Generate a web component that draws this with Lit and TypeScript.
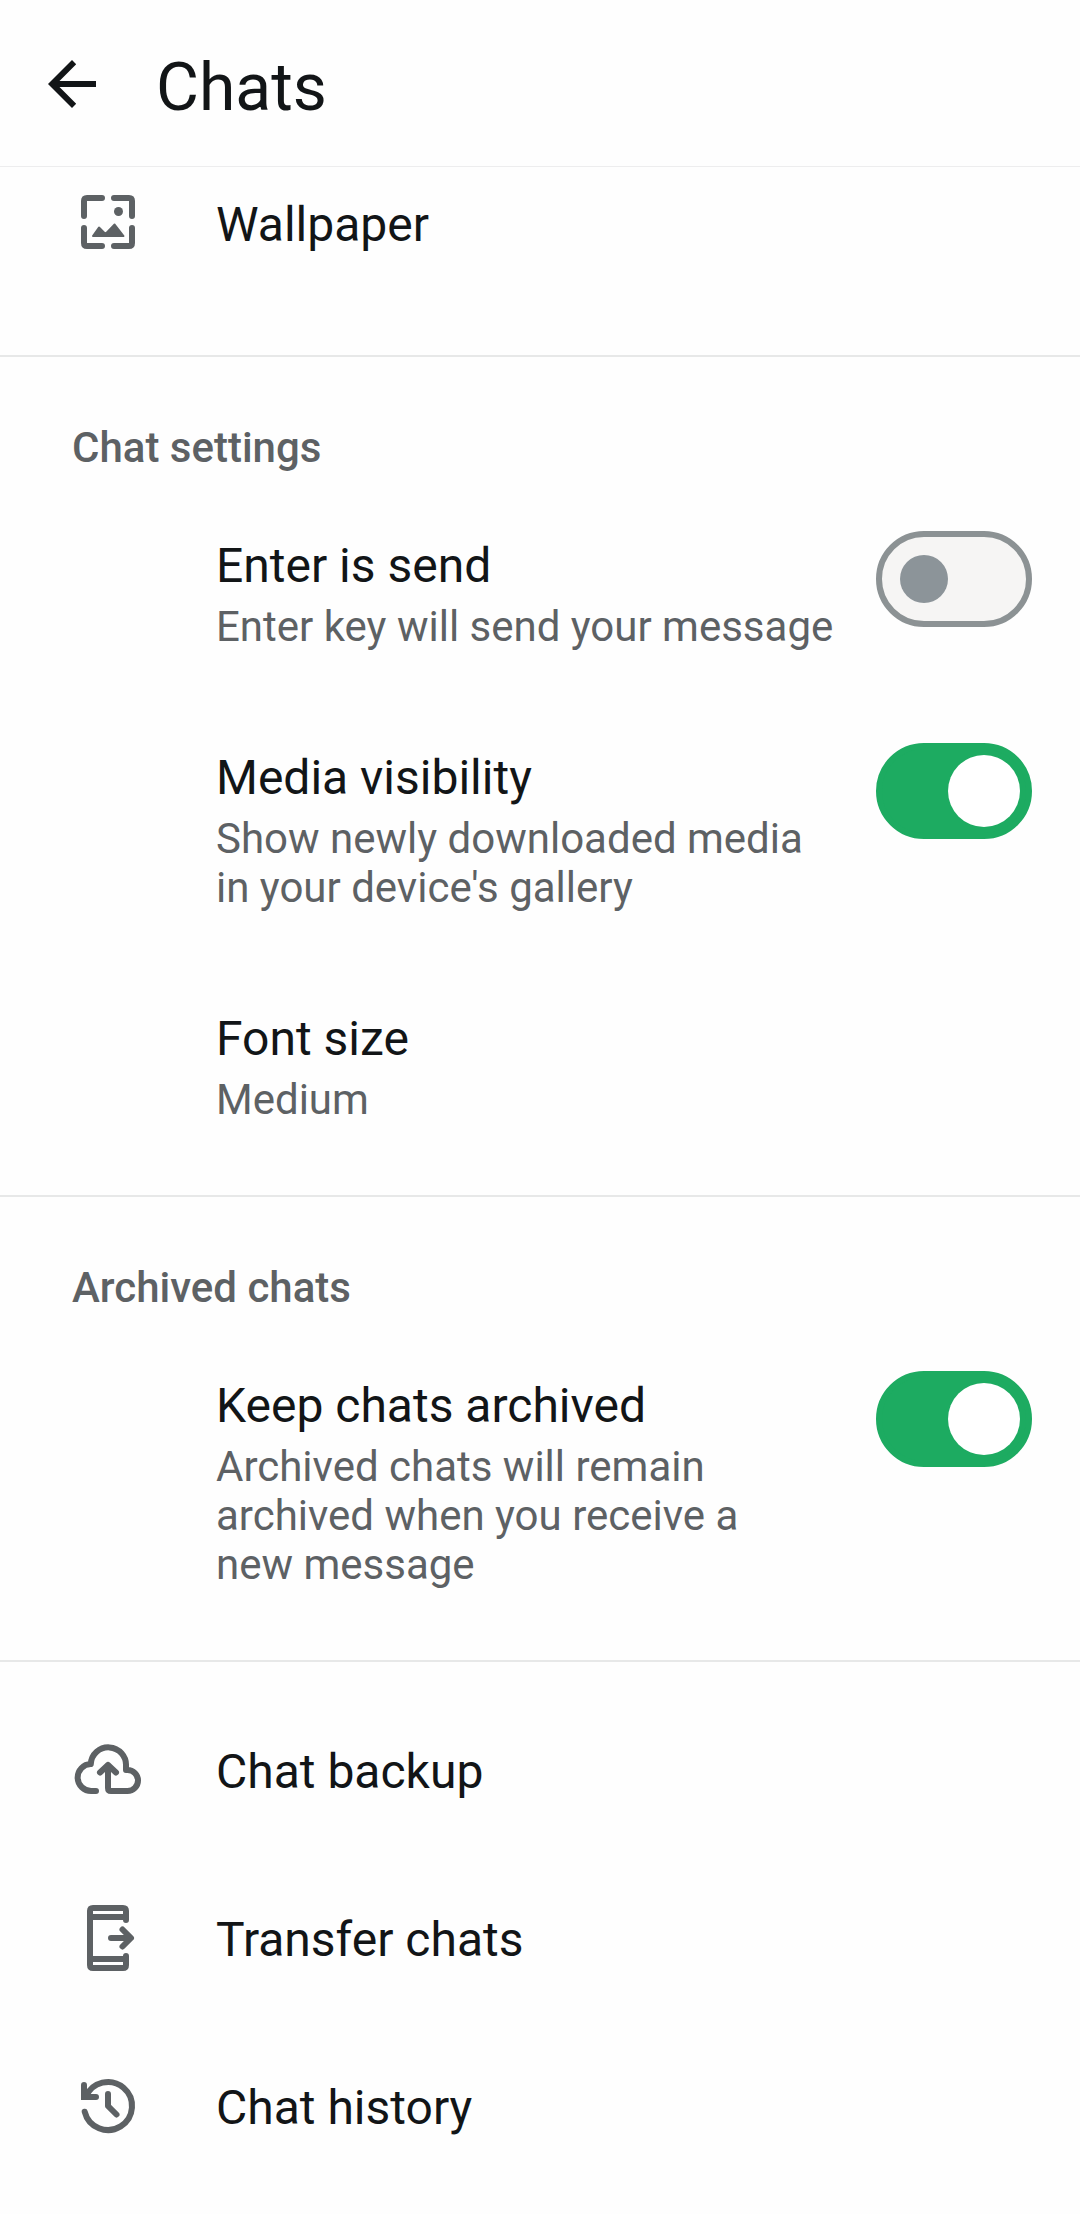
import { LitElement, html, css, svg, nothing } from "lit";
import { customElement, property, state } from "lit/decorators.js";

const icons = {
  back: svg`<path fill="currentColor" stroke="none" d="M60 33H23.5L40.2 16.2 36 12 12 36 36 60 40.2 55.8 23.5 39H60z"/>`,
  wallpaper: svg`
    <path d="M12 29V14Q12 11 15 11H30M42 11H57Q60 11 60 14V29M60 41V56Q60 59 57 59H42M30 59H15Q12 59 12 56V41"/>
    <circle cx="46.5" cy="24.5" r="4.5" fill="currentColor" stroke="none"/>
    <path fill="currentColor" stroke-width="2" d="M21 49 27 40.5 33.5 47 42.6 37.5 51.5 49z"/>`,
  backup: svg`
    <path d="M24 57H19.5A13.5 13.5 0 0 1 18.8 30A17.5 17.5 0 0 1 54 32V36H55.5A10.5 10.5 0 0 1 55.5 57H39Q36 57 36 54V32"/>
    <path d="M28 38.5 36 31 44 38.5"/>`,
  transfer: svg`
    <path d="M54 18V9Q54 6 51 6H21Q18 6 18 9V63Q18 66 21 66H51Q54 66 54 63V54M18 15H54M18 57H54"/>
    <path d="M39 36H58M50.5 27.5 59 36 50.5 44.5"/>`,
  history: svg`
    <path d="M12.7 41.7A24 24 0 1 0 13.8 26.9"/>
    <path d="M12 15V27H24" stroke-linejoin="miter"/>
    <path d="M36 24V36L44.5 44.5"/>`,
};
type IconName = keyof typeof icons;

@customElement("line-icon")
class LineIcon extends LitElement {
  @property() name: IconName = "back";

  static styles = css`
    :host {
      display: block;
      flex: none;
      width: 72px;
      height: 72px;
    }
    .glyph {
      display: block;
      fill: none;
      stroke: currentColor;
      stroke-width: 6;
      stroke-linecap: round;
      stroke-linejoin: round;
    }
  `;

  render() {
    return html`<svg class="glyph" viewBox="0 0 72 72" aria-hidden="true">${icons[this.name]}</svg>`;
  }
}

interface Item {
  id: string;
  title: string;
  detail?: string;
  icon?: IconName;
  toggle?: boolean;
}

const chatSettings: Item[] = [
  { id: "enter", title: "Enter is send", detail: "Enter key will send your message", toggle: true },
  { id: "media", title: "Media visibility", detail: "Show newly downloaded media\nin your device's gallery", toggle: true },
  { id: "font", title: "Font size", detail: "Medium" },
];
const archived: Item[] = [
  {
    id: "archive",
    title: "Keep chats archived",
    detail: "Archived chats will remain\narchived when you receive a\nnew message",
    toggle: true,
  },
];
const actions: Item[] = [
  { id: "backup", title: "Chat backup", icon: "backup" },
  { id: "transfer", title: "Transfer chats", icon: "transfer" },
  { id: "history", title: "Chat history", icon: "history" },
];

@customElement("app-root")
class AppRoot extends LitElement {
  @state() private on: Record<string, boolean> = { enter: false, media: true, archive: true };

  static styles = css`
    :host {
      display: block;
      min-height: 100vh;
      background: #fefefe;
      color: #121517;
      font-family: Roboto, "Liberation Sans", sans-serif;
    }
    button {
      border: 0;
      margin: 0;
      padding: 0;
      background: none;
      color: inherit;
      font: inherit;
      text-align: left;
      cursor: pointer;
    }
    .header {
      display: flex;
      align-items: flex-start;
      gap: 48px;
      padding: 48px 36px 38px;
      border-bottom: 1px solid #ededee;
    }
    .back {
      display: block;
    }
    .heading {
      margin: 0;
      font-size: 66px;
      line-height: 80px;
      font-weight: 400;
    }
    .section {
      border-bottom: 2px solid #e7e8e8;
      padding-bottom: 22px;
    }
    .section.last {
      border: 0;
      padding: 24px 0;
    }
    .section.first {
      padding-bottom: 48px;
    }
    .label {
      margin: 0;
      padding: 66px 72px 16px;
      font-size: 42px;
      line-height: 49px;
      font-weight: 500;
      color: #5d6164;
    }
    .row {
      display: flex;
      align-items: flex-start;
      box-sizing: border-box;
      width: 100%;
      gap: 24px;
      padding: 43px 48px 49px 216px;
      cursor: pointer;
    }
    .text {
      display: flex;
      flex-direction: column;
      flex: 1;
      min-width: 0;
      gap: 7px;
      padding-top: 6px;
    }
    .title {
      font-size: 48px;
      line-height: 58px;
    }
    .detail {
      font-size: 42px;
      line-height: 49px;
      color: #5d6164;
      white-space: pre-line;
    }
    .action {
      display: flex;
      align-items: center;
      width: 100%;
      gap: 72px;
      padding: 48px 72px;
    }
    .action .title {
      padding-top: 3px;
    }
    .first .action {
      padding: 20px 72px 48px;
    }
    .action line-icon {
      color: #5d6164;
    }
    .switch {
      appearance: none;
      display: flex;
      align-items: center;
      flex: none;
      box-sizing: border-box;
      width: 156px;
      height: 96px;
      margin: 0;
      padding: 0 18px;
      border: 6px solid #8c9294;
      border-radius: 48px;
      background: #f6f5f4;
      cursor: pointer;
    }
    .switch::before {
      content: "";
      width: 48px;
      height: 48px;
      border-radius: 50%;
      background: #8c9499;
    }
    .switch:checked {
      justify-content: flex-end;
      padding: 0 6px;
      border-color: #1dab61;
      background: #1dab61;
    }
    .switch:checked::before {
      width: 72px;
      height: 72px;
      background: #fff;
    }
  `;

  private text(item: Item) {
    return html`<span class="text">
      <span class="title">${item.title}</span>
      ${item.detail ? html`<span class="detail">${item.detail}</span>` : nothing}
    </span>`;
  }

  private flip(id: string, event: Event) {
    this.on = { ...this.on, [id]: (event.target as HTMLInputElement).checked };
  }

  private row(item: Item) {
    if (item.icon) {
      return html`<button class="action" type="button">
        <line-icon name=${item.icon}></line-icon>
        <span class="title">${item.title}</span>
      </button>`;
    }
    if (item.toggle) {
      return html`<label class="row" for=${item.id}>
        ${this.text(item)}
        <input
          class="switch"
          type="checkbox"
          role="switch"
          id=${item.id}
          .checked=${this.on[item.id]}
          @change=${(e: Event) => this.flip(item.id, e)}
        />
      </label>`;
    }
    return html`<button class="row" type="button">${this.text(item)}</button>`;
  }

  render() {
    return html`
      <header class="header">
        <button class="back" type="button" aria-label="Back"><line-icon name="back"></line-icon></button>
        <h1 class="heading">Chats</h1>
      </header>
      <main>
        <section class="section first">
          ${this.row({ id: "wallpaper", title: "Wallpaper", icon: "wallpaper" })}
        </section>
        <section class="section">
          <h2 class="label">Chat settings</h2>
          ${chatSettings.map((item) => this.row(item))}
        </section>
        <section class="section">
          <h2 class="label">Archived chats</h2>
          ${archived.map((item) => this.row(item))}
        </section>
        <section class="section last">${actions.map((item) => this.row(item))}</section>
      </main>
    `;
  }
}
